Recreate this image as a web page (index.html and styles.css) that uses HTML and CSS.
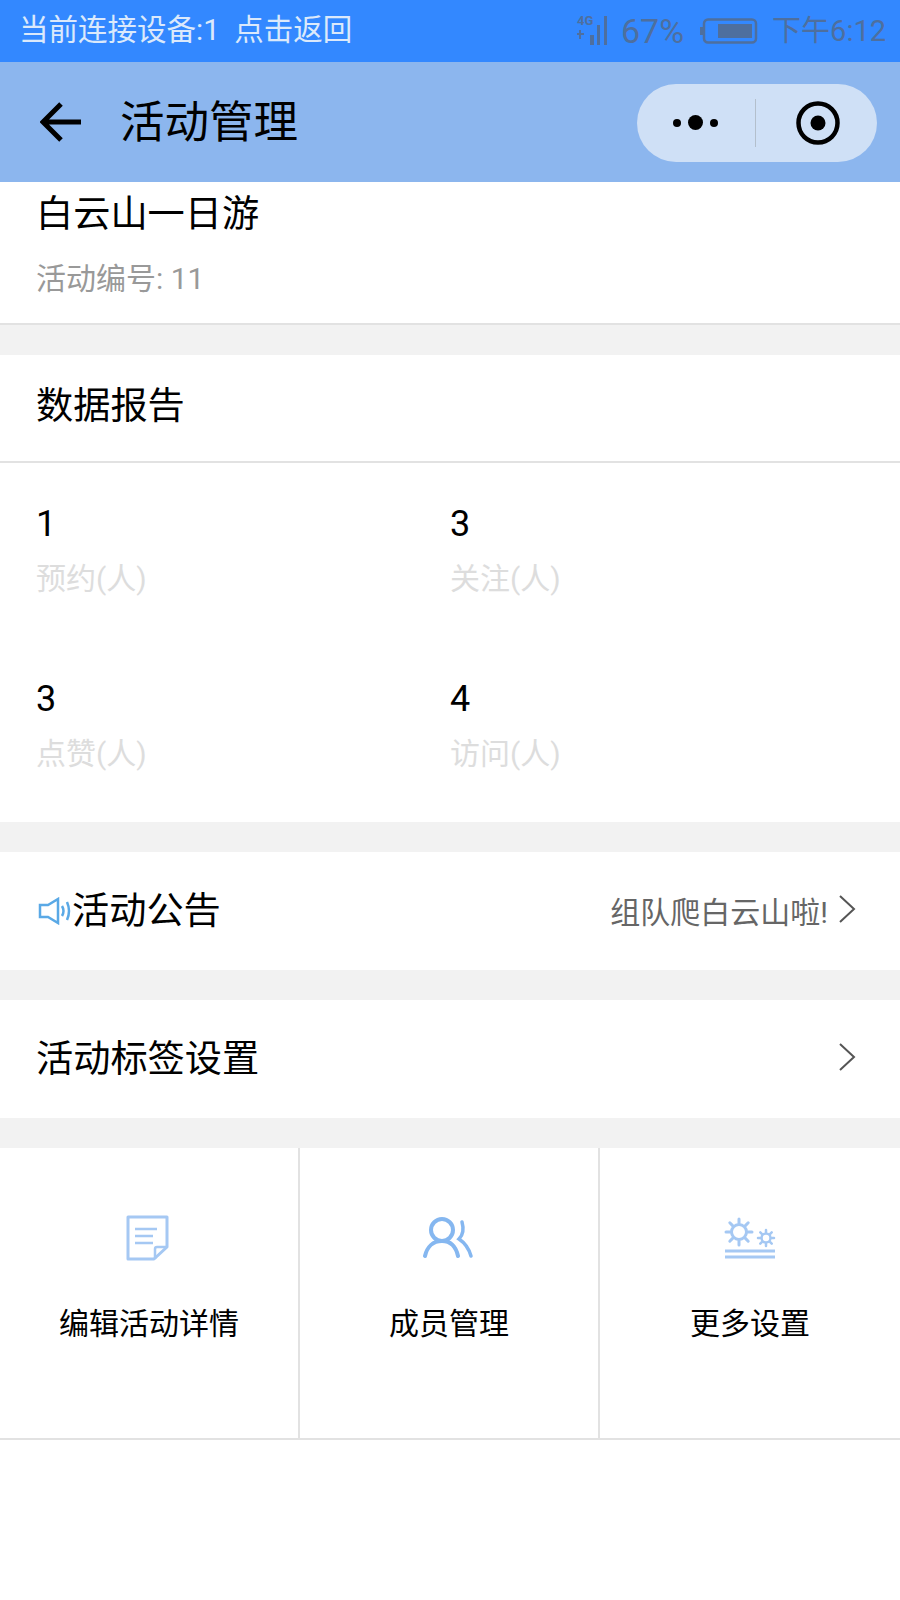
FILE: index.html
```html
<!DOCTYPE html>
<html lang="zh-CN">
<head>
    <meta charset="UTF-8">
    <meta name="viewport" content="width=device-width, initial-scale=1.0">
    <title>活动管理</title>
    <link rel="stylesheet" href="styles.css">
</head>
<body>
    <div class="status-bar">
        <span class="status-left">当前连接设备:1&nbsp;&nbsp;点击返回</span>
        <div class="status-right">
            <svg class="signal" width="32" height="30" viewBox="0 0 32 30">
                <rect x="1" y="17" width="7" height="2" fill="#4e6f9e"/>
                <rect x="3" y="14" width="2" height="9" fill="#4e6f9e"/>
                <rect x="14" y="19" width="4" height="10" fill="#4e6f9e"/>
                <rect x="21" y="9" width="3" height="20" fill="#4e6f9e"/>
                <rect x="28" y="0" width="3" height="29" fill="#4e6f9e"/>
            </svg>
            <span class="signal-text">4G</span>
            <span class="battery-pct">67%</span>
            <svg class="battery" width="58" height="26" viewBox="0 0 58 26">
                <rect x="4" y="1.5" width="52" height="23" rx="4" fill="none" stroke="#4e6f9e" stroke-width="2.5"/>
                <rect x="0" y="9" width="3" height="8" fill="#4e6f9e"/>
                <rect x="18" y="6" width="34" height="14" fill="#4e6f9e"/>
            </svg>
            <span class="clock">下午6:12</span>
        </div>
    </div>

    <div class="nav-bar">
        <svg class="back" width="42" height="42" viewBox="0 0 42 42">
            <path d="M21 3 L3 21 L21 39 M3 21 H41" fill="none" stroke="#000" stroke-width="5"/>
        </svg>
        <h1 class="nav-title">活动管理</h1>
        <div class="capsule">
            <div class="capsule-side">
                <i class="dot"></i><i class="dot dot-big"></i><i class="dot"></i>
            </div>
            <div class="capsule-line"></div>
            <div class="capsule-side capsule-right">
                <svg width="44" height="44" viewBox="0 0 44 44">
                    <circle cx="22" cy="22" r="19.5" fill="none" stroke="#000" stroke-width="4.5"/>
                    <circle cx="22" cy="22" r="7.5" fill="#000"/>
                </svg>
            </div>
        </div>
    </div>

    <section class="head-card">
        <div class="activity-name">白云山一日游</div>
        <div class="activity-no">活动编号: 11</div>
    </section>

    <section class="card">
        <div class="report-title">数据报告</div>
        <div class="stats">
            <div class="stat">
                <div class="stat-num">1</div>
                <div class="stat-label">预约(人)</div>
            </div>
            <div class="stat">
                <div class="stat-num">3</div>
                <div class="stat-label">关注(人)</div>
            </div>
            <div class="stat">
                <div class="stat-num">3</div>
                <div class="stat-label">点赞(人)</div>
            </div>
            <div class="stat">
                <div class="stat-num">4</div>
                <div class="stat-label">访问(人)</div>
            </div>
        </div>
    </section>

    <section class="row">
        <svg class="horn" width="34" height="28" viewBox="0 0 34 28">
            <path d="M2 8 H10 L20 2 V26 L10 20 H2 Z" fill="none" stroke="#5aa9e6" stroke-width="2.5"/>
            <path d="M24 9 Q27 14 24 19 M29 5 Q33 14 29 23" fill="none" stroke="#5aa9e6" stroke-width="2.5"/>
        </svg>
        <span class="row-title">活动公告</span>
        <span class="row-value">组队爬白云山啦!</span>
        <svg class="chevron" width="18" height="28" viewBox="0 0 18 28">
            <path d="M2 1 L16 14 L2 27" fill="none" stroke="#555" stroke-width="2"/>
        </svg>
    </section>

    <section class="row">
        <span class="row-title">活动标签设置</span>
        <svg class="chevron" width="18" height="28" viewBox="0 0 18 28">
            <path d="M2 1 L16 14 L2 27" fill="none" stroke="#555" stroke-width="2"/>
        </svg>
    </section>

    <section class="menu">
        <div class="menu-item">
            <svg class="menu-icon" width="52" height="48" viewBox="0 0 52 48">
                <path d="M5 3 H44 V33 L31 45 H5 Z" fill="none" stroke="#a5c8f3" stroke-width="3" stroke-linejoin="round"/>
                <path d="M44 33 H34 Q32 33 32 35 V45" fill="none" stroke="#a5c8f3" stroke-width="2.5"/>
                <path d="M12 15 H34 M12 22 H30 M12 29 H30" stroke="#a5c8f3" stroke-width="2.5"/>
            </svg>
            <div class="menu-label">编辑活动详情</div>
        </div>
        <div class="menu-item">
            <svg class="menu-icon" width="52" height="48" viewBox="0 0 52 48">
                <circle cx="19" cy="16" r="11" fill="none" stroke="#85b7f0" stroke-width="4"/>
                <path d="M2 42 C4 33 10 27 19 27 C28 27 33 33 35 42" fill="none" stroke="#85b7f0" stroke-width="4" stroke-linecap="round"/>
                <path d="M39 8 C41 15 40 21 36 25 C42 29 46 35 48 42" fill="none" stroke="#85b7f0" stroke-width="3.5" stroke-linecap="round"/>
            </svg>
            <div class="menu-label">成员管理</div>
        </div>
        <div class="menu-item">
            <svg class="menu-icon" width="52" height="48" viewBox="0 0 52 48">
                <circle cx="15" cy="18" r="7.5" fill="none" stroke="#a5c8f3" stroke-width="3"/>
                <path d="M15 5 V9 M15 27 V31 M2 18 H6 M24 18 H28 M5.8 8.8 L8.6 11.6 M21.4 24.4 L24.2 27.2 M24.2 8.8 L21.4 11.6 M8.6 24.4 L5.8 27.2" stroke="#a5c8f3" stroke-width="3" stroke-linecap="round"/>
                <circle cx="42" cy="24" r="4.5" fill="none" stroke="#a5c8f3" stroke-width="2.5"/>
                <path d="M42 16 V18 M42 30 V32 M34 24 H36 M48 24 H50 M36.3 18.3 L37.8 19.8 M46.2 28.2 L47.7 29.7 M47.7 18.3 L46.2 19.8 M37.8 28.2 L36.3 29.7" stroke="#a5c8f3" stroke-width="2.5" stroke-linecap="round"/>
                <path d="M1 37 H51 M1 43 H51" stroke="#a5c8f3" stroke-width="3"/>
            </svg>
            <div class="menu-label">更多设置</div>
        </div>
    </section>
</body>
</html>
```

FILE: styles.css
```css
* {
    box-sizing: border-box;
}
body {
    margin: 0;
    background: #fff;
    color: #000;
    font-family: Roboto, "Noto Sans CJK SC", sans-serif;
}

/* status bar */
.status-bar {
    height: 62px;
    background: #3388ff;
    display: flex;
    align-items: center;
    justify-content: space-between;
    padding: 0 14px 0 19px;
    font-size: 29.5px;
}
.status-left {
    color: #dbe9fb;
    line-height: 1;
}
.status-right {
    position: relative;
    display: flex;
    align-items: center;
    color: #4e6f9e;
    line-height: 1;
}
.signal {
    margin-right: 13px;
}
/* the small 4G sits over the signal bars */
.signal-text {
    position: absolute;
    left: 1px;
    top: 0;
    font-size: 13px;
    line-height: 13px;
    font-weight: 700;
}
.battery-pct {
    font-size: 34px;
    margin-right: 16px;
}
.battery {
    margin-right: 14px;
}
.clock {
    font-size: 29px;
}

/* nav bar */
.nav-bar {
    height: 120px;
    background: #8cb6ee;
    display: flex;
    align-items: center;
    padding: 0 23px 0 40px;
}
.back {
    margin-right: 38px;
}
.nav-title {
    margin: 2px 0 0;
    flex: 1;
    font-size: 44.5px;
    font-weight: 400;
    line-height: 1;
}
.capsule {
    width: 240px;
    height: 78px;
    margin-top: 1px;
    background: #cfe0f6;
    border-radius: 39px;
    display: flex;
    align-items: center;
}
.capsule-side {
    flex: 1;
    display: flex;
    align-items: center;
    justify-content: center;
    gap: 7px;
}
.capsule-right {
    padding-left: 4px;
}
.capsule-line {
    width: 1px;
    height: 48px;
    background: #b3bfcc;
}
.dot {
    width: 8px;
    height: 8px;
    border-radius: 50%;
    background: #000;
}
.dot-big {
    width: 15px;
    height: 15px;
}

/* activity head */
.head-card {
    height: 173px;
    padding: 7px 36px 0;
    border-bottom: 30px solid #f2f2f2;
    box-shadow: inset 0 -2px 0 #e2e2e2;
}
.activity-name {
    font-size: 37.2px;
    line-height: 50px;
}
.activity-no {
    margin-top: 19px;
    font-size: 30px;
    line-height: 42px;
    color: #999;
}

/* data report */
.card {
    border-bottom: 30px solid #f2f2f2;
}
.report-title {
    height: 108px;
    padding: 0 36px;
    font-size: 37.2px;
    line-height: 102px;
    border-bottom: 2px solid #e2e2e2;
}
.stats {
    display: grid;
    grid-template-columns: 1fr 1fr;
    grid-auto-rows: 175px;
    padding: 35px 0 4px;
    height: 359px;
}
.stat {
    padding-left: 36px;
}
.stat:nth-child(even) {
    padding-left: 0;
}
.stat-num {
    font-size: 36px;
    line-height: 52px;
}
.stat-label {
    margin-top: 8px;
    font-size: 30px;
    line-height: 42px;
    color: #ddd;
}

/* list rows */
.row {
    height: 148px;
    border-bottom: 30px solid #f2f2f2;
    padding: 0 44px 4px 36px;
    display: flex;
    align-items: center;
}
.horn {
    margin-top: 4px;
    margin-left: 2px;
    flex-shrink: 0;
}
.row-title {
    flex: 1;
    margin-top: 6px;
    font-size: 37.2px;
    line-height: 1;
}
.row-value {
    margin-top: 8px;
    font-size: 30px;
    line-height: 1;
    color: #666;
    margin-right: 10px;
}

/* bottom menu */
.menu {
    height: 292px;
    display: grid;
    grid-template-columns: repeat(3, 1fr);
    border-bottom: 2px solid #e2e2e2;
}
.menu-item {
    padding-top: 66px;
    text-align: center;
    border-right: 2px solid #e2e2e2;
}
.menu-item:last-child {
    border-right: none;
}
.menu-icon {
    display: block;
    margin: 0 auto;
}
.menu-label {
    margin-top: 41px;
    font-size: 30px;
    line-height: 42px;
}
```
